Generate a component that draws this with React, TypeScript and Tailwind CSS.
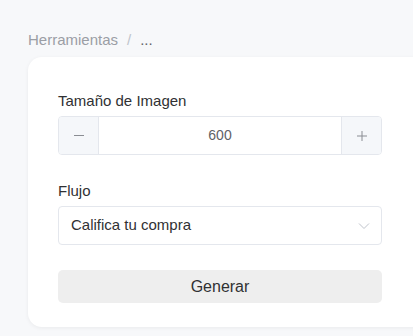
import React from "react";

export default function App() {
  return (
    <div
      className="min-h-screen w-full overflow-hidden bg-[#f7f8fa] pl-[28px] pt-[30px]"
      style={{ fontFamily: '"Liberation Sans", Arial, sans-serif' }}
    >
      <div className="flex items-center h-[20px] text-[15px] leading-[20px] text-[#9b9ea5]">
        <span>Herramientas</span>
        <span className="mx-[9px] text-[#c0c4cc]">/</span>
        <span className="text-[#606266]">...</span>
      </div>
      <div className="mt-[7px] w-[420px] rounded-[14px] bg-white pl-[30px] pt-[34px] pb-[24px] shadow-[0_1px_4px_rgba(0,0,0,0.06)]">
        <div className="w-[324px]">
          <div className="h-[20px] text-[15px] leading-[20px] text-[#303133]">Tamaño de Imagen</div>
          <div className="mt-[5px] flex h-[39px] rounded-[4px] border border-[#e4e7ed] overflow-hidden">
            <div className="flex w-[40px] items-center justify-center bg-[#f5f7fa] border-r border-[#e4e7ed]">
              <div className="h-[1px] w-[10px] bg-[#8a8d93]" />
            </div>
            <div className="flex flex-1 items-center justify-center text-[14px] text-[#606266]">600</div>
            <div className="flex w-[40px] items-center justify-center bg-[#f5f7fa] border-l border-[#e4e7ed]">
              <svg width="12" height="12" viewBox="0 0 12 12">
                <path d="M6 1v10M1 6h10" stroke="#8a8d93" strokeWidth="1" />
              </svg>
            </div>
          </div>

          <div className="mt-[26px] h-[20px] text-[15px] leading-[20px] text-[#303133]">Flujo</div>
          <div className="mt-[5px] flex h-[39px] items-center justify-between rounded-[4px] border border-[#e4e7ed] pl-[12px] pr-[11px]">
            <span className="text-[15px] text-[#303133]">Califica tu compra</span>
            <svg width="12" height="8" viewBox="0 0 12 8">
              <path d="M1 1.5l5 5 5-5" fill="none" stroke="#c0c4cc" strokeWidth="1" />
            </svg>
          </div>

          <button className="mt-[25px] flex h-[33px] w-full items-center justify-center rounded-[5px] bg-[#eeeeee] text-[16px] text-[#303133]">
            Generar
          </button>
        </div>
      </div>
    </div>
  );
}
